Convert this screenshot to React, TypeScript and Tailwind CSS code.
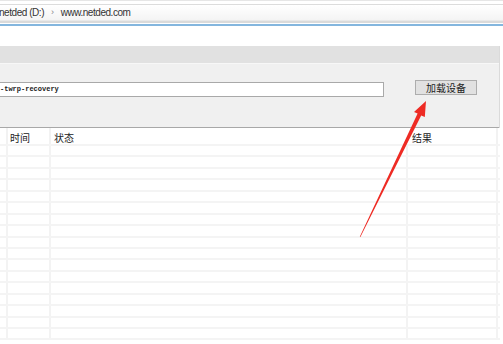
import React from "react";

const rows = Array.from({ length: 17 });

export default function App() {
  return (
    <div className="relative w-[503px] h-[344px] overflow-hidden bg-white" style={{ fontFamily: '"Liberation Sans", "Noto Sans CJK SC", sans-serif' }}>
      {/* address bar */}
      <div className="h-[1px] bg-[#e6e6e6]" />
      <div className="h-[3px] bg-white" />
      <div className="h-[1px] bg-[#dcdcdc]" />
      <div className="h-[15px] bg-gradient-to-b from-white to-[#f4f4f4] flex items-center text-[10px] text-[#333] leading-none tracking-[-0.45px]">
        <span className="-ml-[1px]">netded (D:)</span>
        <span className="ml-[7px] mr-[7px] text-[#888] text-[9px]">›</span>
        <span>www.netded.com</span>
      </div>
      <div className="h-[1px] bg-[#e9e9e9]" />
      <div className="h-[2px] bg-[#dadada]" />
      <div className="h-[1px] bg-white" />
      <div className="h-[2px] bg-[#84b6de]" />
      {/* white spacer */}
      <div className="h-[20px] bg-white" />
      {/* panel */}
      <div className="w-[500px] border-r border-[#dadada]">
        <div className="h-[17px] bg-[#e1e1e1]" />
        <div className="h-[1px] bg-[#f7f7f7]" />
        <div className="h-[63px] bg-[#f0f0f0] flex items-start">
          <div className="mt-[18px] w-[384px] h-[15px] bg-white border border-l-0 border-[#a9a9a9] flex items-center text-[7px] font-bold text-[#222] leading-none" style={{ fontFamily: '"Liberation Mono", monospace' }}>
            <span>-twrp-recovery</span>
          </div>
          <div className="ml-[31px] mt-[16px] w-[62px] h-[15px] bg-[#e1e1e1] border border-[#adadad] flex items-center justify-center text-[10px] text-[#222] leading-none" style={{ fontFamily: '"Noto Sans CJK SC", sans-serif' }}>
            加载设备
          </div>
        </div>
        <div className="h-[1px] bg-[#a8a8a8]" />
      </div>
      {/* table */}
      <div className="relative w-[500px]">
        <div className="h-[18px] flex items-center text-[10px] text-[#222] leading-none border-b-2 border-[#f4f4f4]" style={{ fontFamily: '"Noto Sans CJK SC", sans-serif' }}>
          <div className="w-[8px] h-full border-r-2 border-[#f2f2f2]" />
          <div className="w-[43px] h-full border-r-2 border-[#f2f2f2] flex items-center pl-[2px] pt-[3px]">时间</div>
          <div className="w-[357px] h-full flex items-center pl-[3px] pt-[3px]">状态</div>
          <div className="w-[90px] h-full border-r-2 border-[#f2f2f2] flex items-center pl-[4px] pt-[3px]">结果</div>
        </div>
        {rows.map((_, i) => (
          <div key={i} className="h-[11.44px] flex border-b-2 border-[#f4f4f4] box-border">
            <div className="w-[8px] h-full border-r-2 border-[#f3f3f3]" />
            <div className="w-[43px] h-full border-r-2 border-[#f3f3f3]" />
            <div className="w-[357px] h-full border-r-2 border-[#f3f3f3]" />
            <div className="w-[90px] h-full border-r-2 border-[#f3f3f3]" />
          </div>
        ))}
      </div>
      {/* red arrow annotation */}
      <svg className="absolute left-0 top-0 pointer-events-none" width="503" height="344" viewBox="0 0 503 344">
        <polygon
          points="426,101 424.8,117.1 421.2,115.4 360.4,237 359.8,236.8 417.6,113.6 414,111.9"
          fill="#ee2b24"
        />
      </svg>
    </div>
  );
}
